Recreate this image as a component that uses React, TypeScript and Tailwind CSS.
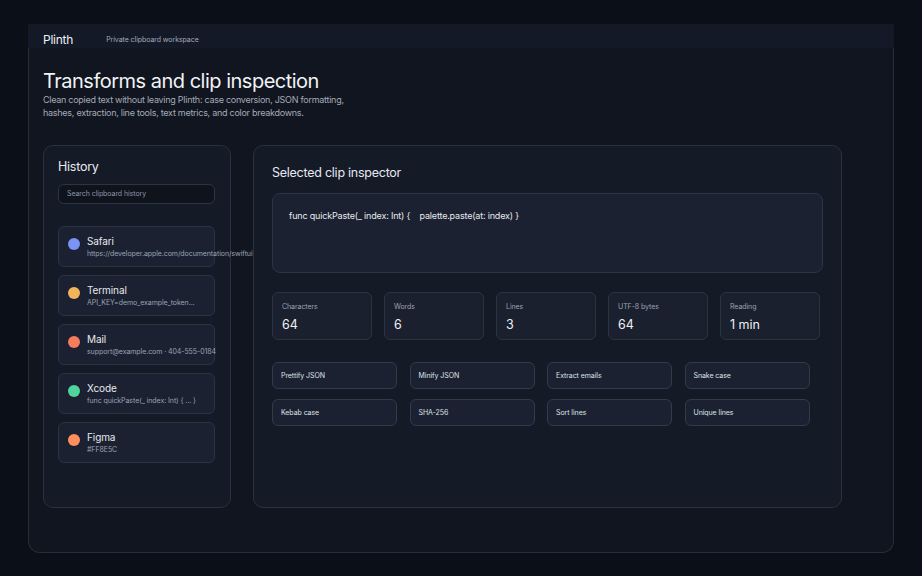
import React from "react";

const history = [
  { app: "Safari", preview: "https://developer.apple.com/documentation/swiftui", dot: "bg-[#7b93f5]" },
  { app: "Terminal", preview: "API_KEY=demo_example_token...", dot: "bg-[#f2b55b]" },
  { app: "Mail", preview: "support@example.com · 404-555-0184", dot: "bg-[#f47c5c]" },
  { app: "Xcode", preview: "func quickPaste(_ index: Int) { ... }", dot: "bg-[#4fd49e]" },
  { app: "Figma", preview: "#FF8E5C", dot: "bg-[#ff8e5c]" },
];

const metrics = [
  { label: "Characters", value: "64" },
  { label: "Words", value: "6" },
  { label: "Lines", value: "3" },
  { label: "UTF-8 bytes", value: "64" },
  { label: "Reading", value: "1 min" },
];

const actions = [
  "Prettify JSON",
  "Minify JSON",
  "Extract emails",
  "Snake case",
  "Kebab case",
  "SHA-256",
  "Sort lines",
  "Unique lines",
];

function HistoryPanel() {
  return (
    <section className="w-[188px] h-[363px] shrink-0 rounded-[10px] border border-[#283041] bg-[#141a26] pl-[14px] pr-[15px] pt-[13px]">
      <h2 className="text-[12.5px] leading-4 tracking-[-0.02em] text-[#e6e9ef]">History</h2>
      <div className="mt-[9px] h-5 rounded-md border border-[#2c3445] bg-[#0e131c] px-[8px] flex items-center">
        <span className="text-[7px] tracking-[-0.01em] text-[#8c95a5]">Search clipboard history</span>
      </div>
      <div className="mt-[22px] flex flex-col gap-2">
        {history.map((h) => (
          <div
            key={h.app}
            className="h-[41px] rounded-md border border-[#2b3343] bg-[#1b2130] pl-[9px] pt-[8px] flex items-start gap-[7px]"
          >
            <span className={`mt-[3px] h-3 w-3 shrink-0 rounded-full ${h.dot}`} />
            <div className="min-w-0">
              <div className="text-[10px] leading-3 tracking-[-0.01em] text-[#e6e9ef]">{h.app}</div>
              <div className="mt-[2px] text-[7px] leading-[10px] tracking-[-0.01em] whitespace-nowrap text-[#9aa3b2]">{h.preview}</div>
            </div>
          </div>
        ))}
      </div>
    </section>
  );
}

function Inspector() {
  return (
    <section className="w-[589px] h-[363px] shrink-0 rounded-[10px] border border-[#283041] bg-[#141a26] px-[18px] pt-[19px]">
      <h2 className="text-[12.5px] leading-4 tracking-[-0.02em] text-[#e6e9ef]">Selected clip inspector</h2>
      <div className="mt-3 h-20 rounded-lg border border-[#2c3445] bg-[#1b2130] px-4 pt-4">
        <p className="text-[9px] leading-3 tracking-[-0.02em] whitespace-pre text-[#e6e9ef]">
          {"func quickPaste(_ index: Int) {    palette.paste(at: index) }"}
        </p>
      </div>
      <div className="mt-[19px] flex gap-3">
        {metrics.map((m) => (
          <div key={m.label} className="h-12 w-[100px] rounded-md border border-[#2b3343] bg-[#1a202d] px-[9px] pt-[9px]">
            <div className="text-[7px] leading-[10px] tracking-[-0.01em] text-[#9aa3b2]">{m.label}</div>
            <div className="mt-[5px] text-[12.5px] leading-4 text-[#eef0f4]">{m.value}</div>
          </div>
        ))}
      </div>
      <div className="mt-[22px] grid grid-cols-[repeat(4,125px)] gap-x-[12.5px] gap-y-[10px]">
        {actions.map((a) => (
          <button
            key={a}
            className="h-[27px] rounded-md border border-[#323b4c] bg-[#1b2130] px-[8px] pt-[2px] text-left text-[7px] tracking-[-0.01em] text-[#dde1e8]"
          >
            {a}
          </button>
        ))}
      </div>
    </section>
  );
}

export default function App() {
  return (
    <div className="min-h-screen bg-[#0b0f17] px-7 py-6 font-['Inter',sans-serif]">
      <div className="flex flex-col">
        <header className="h-6 bg-[#131926] px-[15px] pt-2 flex items-center gap-[33px]">
          <span className="text-[12px] tracking-[-0.02em] text-[#eef0f4]">Plinth</span>
          <span className="text-[7px] tracking-[-0.01em] text-[#a3abb9]">Private clipboard workspace</span>
        </header>
        <main className="rounded-b-xl border-x border-b border-[#262d3b] bg-[#10151f] px-[14px] pt-[21px] pb-[44px]">
          <h1 className="text-[20px] leading-6 tracking-tight text-[#f1f3f6]">Transforms and clip inspection</h1>
          <p className="w-[320px] text-[9px] leading-[13px] tracking-[-0.03em] text-[#a3abb9]">
            Clean copied text without leaving Plinth: case conversion, JSON formatting, hashes, extraction, line tools, text metrics, and color breakdowns.
          </p>
          <div className="mt-[26px] flex gap-[22px]">
            <HistoryPanel />
            <Inspector />
          </div>
        </main>
      </div>
    </div>
  );
}
